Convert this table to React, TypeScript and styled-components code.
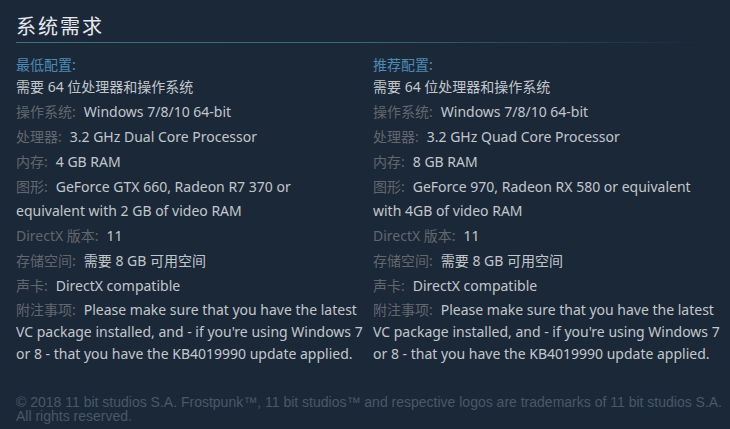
import React from "react";
import styled, { createGlobalStyle } from "styled-components";

const Global = createGlobalStyle`
  html, body { margin: 0; padding: 0; background: #1b2838; }
  body { width: 730px; height: 429px; overflow: hidden; }
`;

const Page = styled.div`
  padding: 12px 0 0 16px;
  font-family: "Noto Sans", "Noto Sans CJK SC", sans-serif;
  color: #c6d4df;
`;

const Heading = styled.h2`
  margin: 0;
  font-weight: 400;
  font-size: 20px;
  line-height: 28px;
  letter-spacing: 2px;
  color: #e6eaee;
  font-family: "Noto Sans CJK SC", sans-serif;
  padding-bottom: 2px;
`;

const Rule = styled.div`
  height: 1px;
  width: 690px;
  background: linear-gradient(to right, #3d6f8f 0%, #3a6684 50%, rgba(58, 102, 132, 0) 100%);
  margin-bottom: 9px;
`;

const Columns = styled.div`
  display: grid;
  grid-template-columns: 348px 352px;
  column-gap: 9px;
`;

const Col = styled.div`
  font-size: 14px;
`;

const ColTitle = styled.div`
  color: #4b8bb5;
  line-height: 24px;
  font-family: "Noto Sans CJK SC", sans-serif;
  margin-bottom: -1px;
`;

const List = styled.ul`
  list-style: none;
  margin: 0;
  padding: 0;
`;

const Item = styled.li<{ $tight?: boolean; $narrow?: boolean }>`
  line-height: ${(p) => (p.$tight ? "22px" : "24px")};
  margin-bottom: 1px;
  color: #c2c7cc;
  max-width: ${(p) => (p.$narrow ? "340px" : "none")};
`;

const Label = styled.span`
  color: #62676d;
  margin-right: 8px;
`;

const Footer = styled.div`
  margin-top: 29px;
  font-family: "Liberation Sans", Arial, sans-serif;
  font-size: 14px;
  line-height: 14px;
  color: #4b5865;
`;

type Spec = { label?: string; value: string; tight?: boolean; narrow?: boolean };

const notes =
  "Please make sure that you have the latest VC package installed, and - if you're using Windows 7 or 8 - that you have the KB4019990 update applied.";

const minimum: Spec[] = [
  { value: "需要 64 位处理器和操作系统" },
  { label: "操作系统:", value: "Windows 7/8/10 64-bit" },
  { label: "处理器:", value: "3.2 GHz Dual Core Processor" },
  { label: "内存:", value: "4 GB RAM" },
  { label: "图形:", value: "GeForce GTX 660, Radeon R7 370 or equivalent with 2 GB of video RAM", narrow: true },
  { label: "DirectX 版本:", value: "11" },
  { label: "存储空间:", value: "需要 8 GB 可用空间" },
  { label: "声卡:", value: "DirectX compatible" },
  { label: "附注事项:", value: notes, tight: true },
];

const recommended: Spec[] = [
  { value: "需要 64 位处理器和操作系统" },
  { label: "操作系统:", value: "Windows 7/8/10 64-bit" },
  { label: "处理器:", value: "3.2 GHz Quad Core Processor" },
  { label: "内存:", value: "8 GB RAM" },
  { label: "图形:", value: "GeForce 970, Radeon RX 580 or equivalent with 4GB of video RAM", narrow: true },
  { label: "DirectX 版本:", value: "11" },
  { label: "存储空间:", value: "需要 8 GB 可用空间" },
  { label: "声卡:", value: "DirectX compatible" },
  { label: "附注事项:", value: notes, tight: true },
];

const SpecColumn = ({ title, specs }: { title: string; specs: Spec[] }) => (
  <Col>
    <ColTitle>{title}</ColTitle>
    <List>
      {specs.map((s, i) => (
        <Item key={i} $tight={s.tight} $narrow={s.narrow}>
          {s.label && <Label>{s.label}</Label>}
          {s.value}
        </Item>
      ))}
    </List>
  </Col>
);

export default function App() {
  return (
    <>
      <Global />
      <Page>
        <Heading>系统需求</Heading>
        <Rule />
        <Columns>
          <SpecColumn title="最低配置:" specs={minimum} />
          <SpecColumn title="推荐配置:" specs={recommended} />
        </Columns>
        <Footer>
          © 2018 11 bit studios S.A. Frostpunk™, 11 bit studios™ and respective logos are trademarks of 11 bit studios S.A. All rights reserved.
        </Footer>
      </Page>
    </>
  );
}
